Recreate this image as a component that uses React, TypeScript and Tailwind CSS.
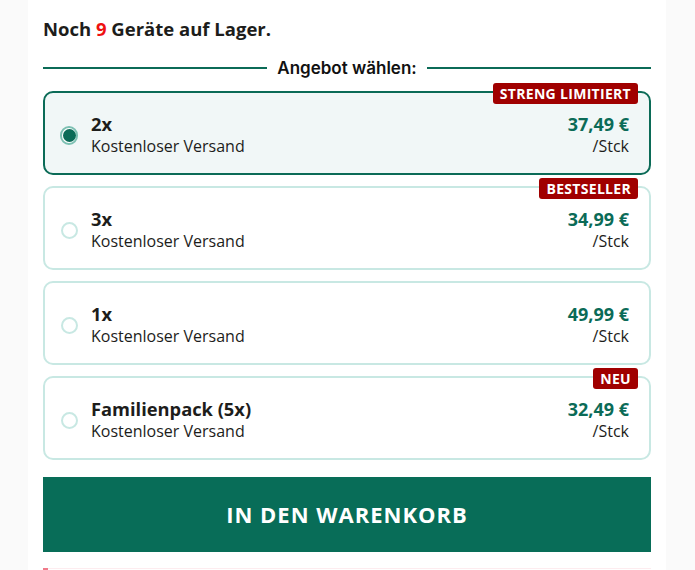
import React from "react";

type Offer = {
  qty: string;
  price: string;
  badge?: string;
  selected?: boolean;
};

const offers: Offer[] = [
  { qty: "2x", price: "37,49 €", badge: "STRENG LIMITIERT", selected: true },
  { qty: "3x", price: "34,99 €", badge: "BESTSELLER" },
  { qty: "1x", price: "49,99 €" },
  { qty: "Familienpack (5x)", price: "32,49 €", badge: "NEU" },
];

function OfferCard({ o }: { o: Offer }) {
  return (
    <div
      className={
        "relative flex items-center rounded-[10px] border-2 h-[84px] pt-[4px] pl-[15px] pr-[20px] " +
        (o.selected ? "border-[#0b6b57] bg-[#f1f7f7]" : "border-[#c8e8e3] bg-white")
      }
    >
      {o.badge && (
        <div className="absolute right-[11px] top-[-10px] h-[21px] px-[7px] rounded-[3px] bg-[#a00000] text-white text-[14px] font-bold leading-[21px] tracking-[0.3px]">
          {o.badge}
        </div>
      )}
      <div className="w-[18px] h-[18px] flex items-center justify-center mr-[13px]">
        {o.selected ? (
          <div className="w-[19px] h-[19px] rounded-full border-2 border-[#7cc0b2] flex items-center justify-center bg-white">
            <div className="w-[13px] h-[13px] rounded-full bg-[#0b6b57]" />
          </div>
        ) : (
          <div className="w-[17px] h-[17px] rounded-full border-2 border-[#c8e8e3] bg-white" />
        )}
      </div>
      <div className="flex-1 flex flex-col">
        <div className="text-[18.3px] font-bold leading-[22px] text-[#1d1d1b]">{o.qty}</div>
        <div className="text-[16px] leading-[22px] text-[#1d1d1b]">Kostenloser Versand</div>
      </div>
      <div className="flex flex-col items-end">
        <div className="text-[18px] font-bold leading-[22px] text-[#0b6b57]">{o.price}</div>
        <div className="text-[16px] leading-[22px] text-[#1d1d1b]">/Stck</div>
      </div>
    </div>
  );
}

export default function App() {
  return (
    <div
      className="w-[695px] h-[570px] bg-[#fafafa] overflow-hidden"
      style={{ fontFamily: '"Open Sans", "Liberation Sans", sans-serif' }}
    >
      <div className="ml-[28px] w-[638px] h-full bg-white px-[15px] pt-[17px]">
        <div className="text-[18.5px] font-bold leading-[24px] text-[#1d1d1b]">
          Noch <span className="text-[#ee1111]">9</span> Geräte auf Lager.
        </div>
        <div className="flex items-center gap-[10px] mt-[17px]">
          <div className="flex-1 h-[2px] bg-[#0b6b57]" />
          <div
            className="text-[17px] font-semibold leading-[20px] text-[#111]"
            style={{ fontFamily: 'Inter, "Liberation Sans", sans-serif' }}
          >
            Angebot wählen:
          </div>
          <div className="flex-1 h-[2px] bg-[#0b6b57]" />
        </div>
        <div className="flex flex-col gap-[11px] mt-[13px]">
          {offers.map((o) => (
            <OfferCard key={o.qty} o={o} />
          ))}
        </div>
        <button className="mt-[17px] w-full h-[75px] bg-[#086d58] text-white text-[22px] font-bold tracking-[1px] flex items-center justify-center">
          IN DEN WARENKORB
        </button>
        <div className="mt-[16px] h-[2px] flex">
          <div className="w-[5px] h-[2px] bg-[#f07a8a]" />
          <div className="flex-1 h-[1px] bg-[#fdecef]" />
        </div>
      </div>
    </div>
  );
}
